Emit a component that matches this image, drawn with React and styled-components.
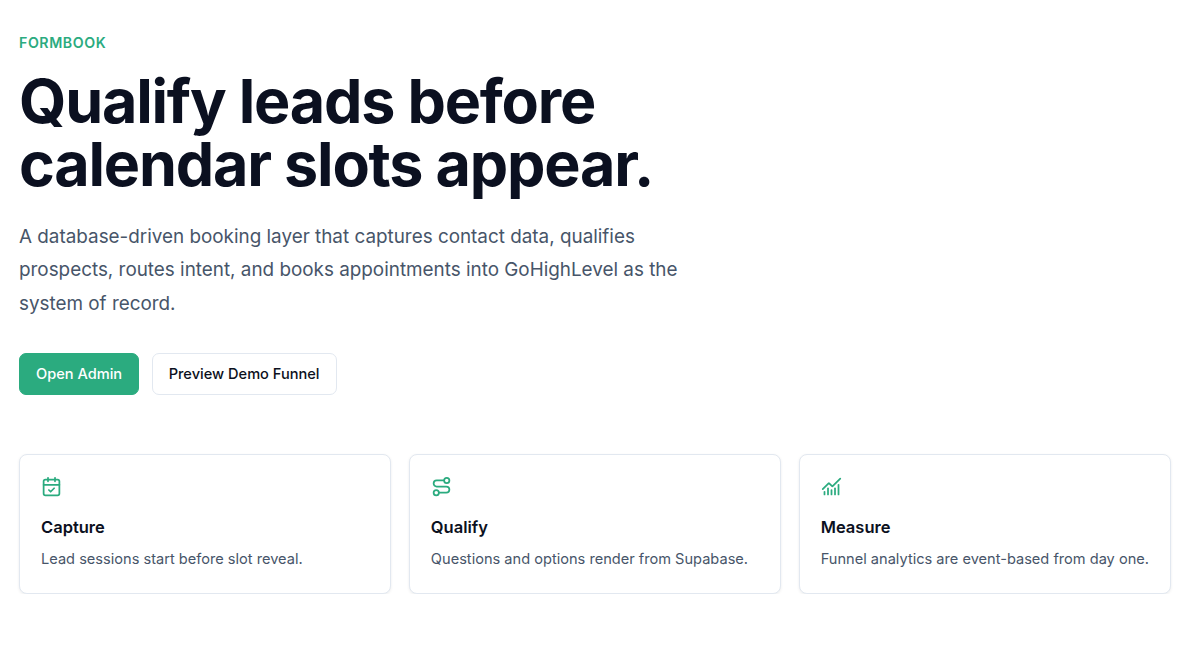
import React from 'react'
import styled, { createGlobalStyle } from 'styled-components'
import { CalendarCheck, Route, ChartNoAxesCombined } from 'lucide-react'

const GlobalStyle = createGlobalStyle`
  * { box-sizing: border-box; }
  html, body { margin: 0; background: #ffffff; }
  body { font-family: Inter, "Liberation Sans", sans-serif; color: #0b1020; }
`

const Page = styled.main`
  width: 1152px;
  margin-left: 19px;
  padding-top: 34px;
`

const Eyebrow = styled.p`
  margin: 0;
  font-size: 14.2px;
  line-height: 18px;
  font-weight: 600;
  letter-spacing: 0.56px;
  color: #2bab7f;
  text-transform: uppercase;
`

const Title = styled.h1`
  margin: 18px 0 0;
  max-width: 760px;
  font-size: 61px;
  line-height: 63px;
  font-weight: 700;
  letter-spacing: -1.2px;
  color: #0b1020;
`

const Lead = styled.p`
  margin: 24px 0 0;
  max-width: 680px;
  font-size: 18.86px;
  line-height: 33.3px;
  color: #475569;
`

const Actions = styled.div`
  display: flex;
  gap: 12.5px;
  margin-top: 33px;
`

const Button = styled.a`
  display: inline-flex;
  align-items: center;
  height: 42px;
  padding: 0 16px;
  border-radius: 7px;
  border: 1px solid ${(props) => (props.$primary ? '#2bab7f' : '#e2e8f0')};
  background: ${(props) => (props.$primary ? '#2bab7f' : '#ffffff')};
  color: ${(props) => (props.$primary ? '#ffffff' : '#0b1020')};
  font-size: 14.6px;
  font-weight: 500;
`

const Cards = styled.section`
  display: grid;
  grid-template-columns: repeat(3, 1fr);
  gap: 17.6px;
  margin-top: 59px;
`

const Card = styled.article`
  height: 140px;
  padding: 21px;
  border: 1px solid #e2e8f0;
  border-radius: 8px;
  box-shadow: 0 1px 3px rgba(15, 23, 42, 0.08);
  background: #ffffff;
`

const IconWrap = styled.div`
  height: 21px;
  color: #2bab7f;
  svg { display: block; }
`

const CardTitle = styled.h3`
  margin: 19px 0 0;
  font-size: 16.5px;
  line-height: 22px;
  font-weight: 600;
  color: #0b1020;
`

const CardText = styled.p`
  margin: 10px 0 0;
  font-size: 14.6px;
  line-height: 22px;
  color: #475569;
`

const features = [
  { icon: CalendarCheck, title: 'Capture', text: 'Lead sessions start before slot reveal.' },
  { icon: Route, title: 'Qualify', text: 'Questions and options render from Supabase.' },
  { icon: ChartNoAxesCombined, title: 'Measure', text: 'Funnel analytics are event-based from day one.' },
]

export default function App() {
  return (
    <>
      <GlobalStyle />
      <Page>
        <Eyebrow>FormBook</Eyebrow>
        <Title>Qualify leads before calendar slots appear.</Title>
        <Lead>
          A database-driven booking layer that captures contact data, qualifies prospects, routes intent, and books appointments into GoHighLevel as the system of record.
        </Lead>
        <Actions>
          <Button $primary>Open Admin</Button>
          <Button>Preview Demo Funnel</Button>
        </Actions>
        <Cards>
          {features.map((item) => (
            <Card key={item.title}>
              <IconWrap><item.icon size={21} strokeWidth={2} /></IconWrap>
              <CardTitle>{item.title}</CardTitle>
              <CardText>{item.text}</CardText>
            </Card>
          ))}
        </Cards>
      </Page>
    </>
  )
}
